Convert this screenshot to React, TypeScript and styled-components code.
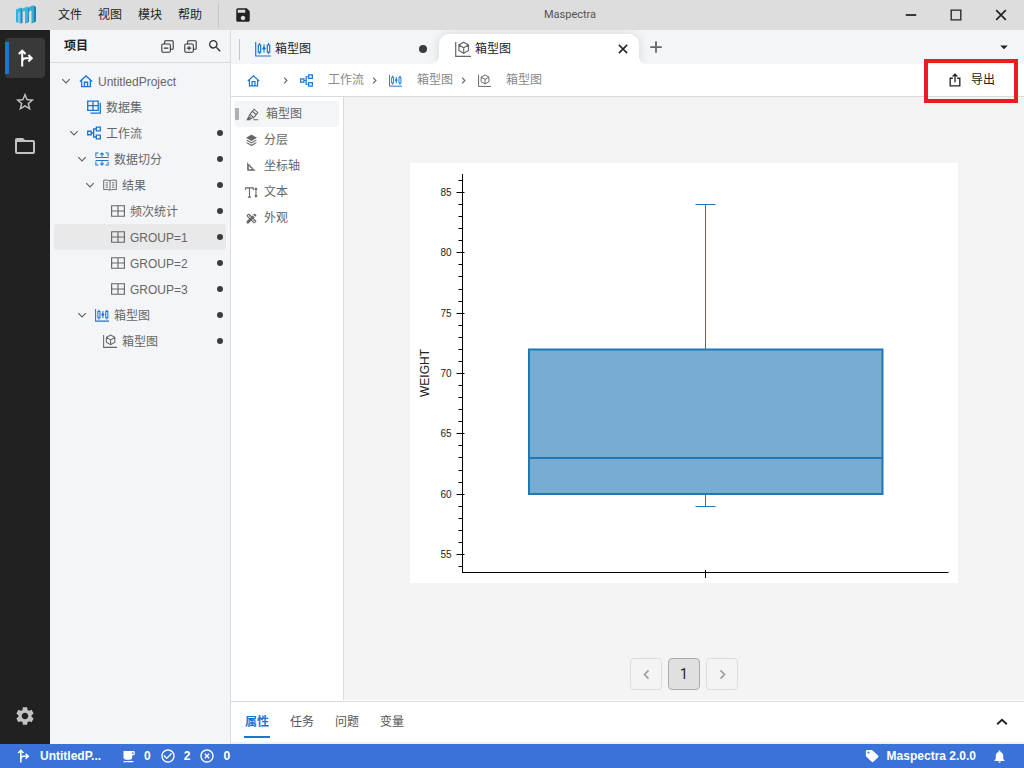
import React from "react";
import styled, { createGlobalStyle } from "styled-components";
import {
  MdSave,
  MdSearch,
  MdStarOutline,
  MdFolderOpen,
  MdSettings,
  MdLocalCafe,
  MdCheckCircleOutline,
  MdHighlightOff,
  MdNotifications,
  MdArrowDropDown,
  MdSquareFoot,
  MdDesignServices,
} from "react-icons/md";
import { RiStackFill } from "react-icons/ri";

const blue = "#1976d2";
const line = "#dadbdd";
const panel = "#f4f5f8";

const GlobalStyle = createGlobalStyle`
  *, *::before, *::after { box-sizing: border-box; }
  body {
    margin: 0;
    font: 400 12px/16px "Liberation Sans", "Noto Sans CJK SC", sans-serif;
    color: #666;
  }
  button { font: inherit; color: inherit; background: none; border: 0; padding: 0; cursor: pointer; }
  ul, ol { list-style: none; margin: 0; padding: 0; }
  svg { display: block; flex: none; }
`;

/* ---------- icons ---------- */

type IconName =
  | "branch" | "home" | "dataset" | "flow" | "split" | "book" | "grid"
  | "boxplot" | "cube" | "chevDown" | "chevRight" | "chevLeft" | "chevUp"
  | "collapse" | "expand" | "plus" | "close" | "minimize" | "maximize"
  | "share" | "pen" | "textSize" | "tag";

const drawings: Record<IconName, React.ReactNode> = {
  branch: (
    <g strokeWidth="1.8">
      <path d="M5.500 15.500V1.500M2.500 4.500 5.500 1.500l3 3M5.500 12c0-2.500.8-3.700 3-3.700h5.300M11 5.400l3 2.900-3 2.900" />
    </g>
  ),
  home: <path d="M1 8.600 8 2.200l7 6.400M3 7.200v7.300h10V7.200M6.200 14.200V9.400h3.600v4.800" strokeWidth="1.500" />,
  dataset: <path d="M.8 1.200h12v10.600h-12zM.8 6.500h12M6.800 1.200v10.600M15.200 3v12H4" strokeWidth="1.500" />,
  flow: <path d="M.8 6h4v4h-4zM10.700 1.200h4.500v4.300h-4.500zM10.700 10.500h4.500v4.300h-4.500zM4.800 8h2.700M10.700 3.400H7.600v9.200h3.100" strokeWidth="1.500" />,
  split: (
    <path
      d="M4 1.200H1V5M12 1.200h3V5M.5 6.300h15M.5 9.700h15M1 11v3.800h3M15 11v3.800h-3M8 5.300v-4M6 3l2-2 2 2M8 10.700v4M6 13l2 2 2-2"
      strokeWidth="1.200"
    />
  ),
  book: (
    <path
      d="M8 3v10.500M8 3.200C6 2.300 3 2.300.8 2.500v10.700c2.200-.2 5.200-.2 7.200.7 2-.9 5-.9 7.200-.7V2.500C13 2.300 10 2.300 8 3.200M3 5.500h2.700M3 8h2.700M3 10.500h2.700M10.300 5.500H13M10.300 8H13M10.300 10.500H13"
      strokeWidth="1.100"
    />
  ),
  grid: <path d="M.7 2h14.600v12H.7zM.7 8h14.600M8 2v12" strokeWidth="1.300" />,
  boxplot: (
    <path
      d="M.7 1v14H16M4.500 2v2M4.500 11v2M3.300 4h2.400v7.200H3.300zM9 3.500v8M7.800 7.500 9 6l1.200 1.500L9 9zM13.500 2v2M13.500 11v2M12.300 4h2.400v7.200h-2.400z"
      strokeWidth="1.200"
    />
  ),
  cube: (
    <path
      d="M.7 1v14.300H16M8.700 1.200l4.800 2.700v5.600l-4.800 2.700-4.800-2.700V3.900zM3.900 3.900l4.800 2.800 4.800-2.800M8.700 6.700V12"
      strokeWidth="1.200"
    />
  ),
  chevDown: <path d="m3 5.500 5 5 5-5" strokeWidth="1.700" />,
  chevRight: <path d="m5.500 3 5 5-5 5" strokeWidth="2" />,
  chevLeft: <path d="m10.500 3-5 5 5 5" strokeWidth="2" />,
  chevUp: <path d="m2.500 10.500 5.500-5 5.500 5" strokeWidth="2.200" />,
  collapse: (
    <g strokeWidth="1.300">
      <rect x="1" y="5" width="10.500" height="10" rx="1.500" />
      <path d="M4.500 5V2q0-1 1-1h8.500q1 0 1 1v8.500q0 1-1 1h-2.500M3.500 10h5.500" />
    </g>
  ),
  expand: (
    <g strokeWidth="1.300">
      <rect x="1" y="5" width="10.500" height="10" rx="1.500" />
      <path d="M4.500 5V2q0-1 1-1h8.500q1 0 1 1v8.500q0 1-1 1h-2.500M3.500 10h5.500M6.200 7.300v5.400" />
    </g>
  ),
  plus: <path d="M8 1.500v13M1.500 8h13" strokeWidth="2" />,
  close: <path d="m2.500 2.500 11 11M13.500 2.500l-11 11" strokeWidth="1.900" />,
  minimize: <path d="M2 8h12" strokeWidth="2" />,
  maximize: <path d="M2.500 2.500h11v11h-11z" strokeWidth="1.500" />,
  share: <path d="M5.500 6H2.500v8.700h11V6h-3M8 10.500v-9M5.300 4 8 1.300 10.700 4" strokeWidth="1.500" />,
  pen: (
    <path
      d="M1 14.500h4.500M1.500 14.300 5 7.500 10 1.500l4.500 4.300-5 6zM5 7.500l4.500 4.300M8 4l4.500 4.300M2 14l4.200-3.800M9 14.500h6"
      strokeWidth="1.300"
    />
  ),
  textSize: (
    <path
      d="M.8 5V2.300h9.400V5M5.500 2.300v11.400M3.500 13.700h4M13.500 2.500v11M12 4.500l1.500-2 1.500 2M12 11.500l1.500 2 1.500-2"
      strokeWidth="1.300"
    />
  ),
  tag: (
    <path
      fillRule="evenodd"
      d="M1 2.500Q1 1 2.500 1H8l7 6.500q.8.900 0 1.800L9.600 14.700q-1 .8-2 0L1 8.200zM4 2.800a1.200 1.200 0 1 0 0 2.400 1.200 1.200 0 0 0 0-2.400z"
      fill="currentColor"
      stroke="none"
    />
  ),
};

const Icon = ({ name, size = 14, color = "currentColor" }: { name: IconName; size?: number; color?: string }) => (
  <svg width={size} height={size} viewBox="0 0 16 16" fill="none" stroke={color} aria-hidden="true">
    {drawings[name]}
  </svg>
);

const Logo = () => (
  <svg width="20" height="20" viewBox="0 0 20 20" aria-hidden="true">
    <path d="M0 4.500 5 2.500v14L3.500 18V7L2.500 7.500V18L0 17z" fill="#2fb4e2" />
    <path d="M5 2.500 6.500 4v14l-3 .5L5 16.500z" fill="#1c86b4" />
    <path d="M6.500 3.500 11.500 1.500V16L9 18.500V6L6.500 7z" fill="#35b9df" />
    <path d="M11.500 1.500 13 3v14l-4 1.500L11.500 16z" fill="#1d8fbd" />
    <path d="M13 2 17.500.3V16L15.500 18.500V5.500L13 6.500z" fill="#2fb0dc" />
    <path d="M17.500.3 20 2v14.500l-4.500 2 2-2.500z" fill="#1f7fae" />
  </svg>
);

/* ---------- layout ---------- */

const Shell = styled.div`
  display: flex;
  flex-direction: column;
  min-height: 100vh;
`;

const TitleBar = styled.header`
  display: flex;
  align-items: center;
  height: 30px;
  padding: 0 1px 0 16px;
  background: #dddddd;
  color: #222;
`;

const Menu = styled.nav`
  display: flex;
  gap: 16px;
  padding: 0 16px 0 22px;
`;

const Divider = styled.span<{ $height: number }>`
  width: 1px;
  height: ${(p) => p.$height}px;
  background: #c6c6c8;
`;

const SaveButton = styled.button`
  margin-left: 15px;
`;

const AppTitle = styled.h1`
  flex: 1;
  margin: 0;
  text-align: center;
  font-family: Roboto, sans-serif;
  font-size: 11px;
  font-weight: 400;
  color: #555;
`;

const WindowButton = styled.button`
  display: grid;
  place-items: center;
  width: 45px;
  height: 30px;
`;

const Body = styled.div`
  display: flex;
  flex: 1;
`;

const Rail = styled.nav`
  display: flex;
  flex-direction: column;
  gap: 4px;
  width: 50px;
  padding: 8px 5px;
  background: #212121;
`;

const RailButton = styled.button<{ $active?: boolean; $last?: boolean }>`
  display: grid;
  place-items: center;
  height: 40px;
  border-radius: 4px;
  color: ${(p) => (p.$active ? "#fff" : "#c2c2c2")};
  background: ${(p) =>
    p.$active ? `linear-gradient(${blue}, ${blue}) 0 4px / 4px 32px no-repeat #393939` : "none"};
  margin-top: ${(p) => (p.$last ? "auto" : "0")};
`;

const Project = styled.aside`
  display: flex;
  flex-direction: column;
  width: 181px;
  background: ${panel};
  border-right: 1px solid ${line};
`;

const ProjectHeader = styled.div`
  display: flex;
  align-items: center;
  gap: 10px;
  height: 33px;
  padding: 0 7px 0 14px;
  border-bottom: 1px solid ${line};
  color: #333;
`;

const ProjectTitle = styled.h2`
  flex: 1;
  margin: 0;
  font-size: 12px;
  font-weight: 700;
  color: #222;
`;

const Tree = styled.ul`
  padding: 5px 4px;
`;

const TreeRow = styled.button<{ $level: number; $selected?: boolean }>`
  display: flex;
  align-items: center;
  width: 100%;
  height: 26px;
  padding: 0 3px 0 ${(p) => 6 + p.$level * 8}px;
  border-radius: 3px;
  background: ${(p) => (p.$selected ? "#e9e9e9" : "none")};
`;

const Twist = styled.span`
  width: 12px;
  margin-right: 7px;
`;

const TreeLabel = styled.span`
  flex: 1;
  padding: 2px 0 0 5px;
  text-align: left;
`;

const Dot = styled.span<{ $size: number }>`
  width: ${(p) => p.$size}px;
  height: ${(p) => p.$size}px;
  border-radius: 50%;
  background: #3c3c3c;
`;

const Main = styled.main`
  display: flex;
  flex: 1;
  flex-direction: column;
  min-width: 0;
  background: #fff;
`;

const TabBar = styled.div`
  display: flex;
  align-items: flex-end;
  height: 34px;
  padding: 0 11px 0 8px;
  background: ${panel};
`;

const TabDivider = styled(Divider)`
  margin-bottom: 4px;
`;

const Tab = styled.div<{ $active?: boolean }>`
  position: relative;
  display: flex;
  align-items: center;
  width: ${(p) => (p.$active ? 200 : 199)}px;
  height: 30px;
  padding: 0 ${(p) => (p.$active ? 10 : 12)}px 0 ${(p) => (p.$active ? 16 : 15)}px;
  border-radius: 10px 10px 0 0;
  background: ${(p) => (p.$active ? "#fff" : "none")};
  box-shadow: ${(p) => (p.$active ? "0 0 12px rgba(0, 0, 0, 0.13)" : "none")};
  clip-path: inset(-4px -14px 0 -14px);
  color: #222;

  &::before,
  &::after {
    content: ${(p) => (p.$active ? '""' : "none")};
    position: absolute;
    bottom: 0;
    width: 8px;
    height: 8px;
  }
  &::before {
    right: 100%;
    background: radial-gradient(circle at 0 0, transparent 8px, #fff 8px);
  }
  &::after {
    left: 100%;
    background: radial-gradient(circle at 100% 0, transparent 8px, #fff 8px);
  }
`;

const TabLabel = styled.button`
  display: flex;
  flex: 1;
  align-items: center;
  gap: 4px;
`;

const AddTab = styled.button`
  display: grid;
  place-items: center;
  width: 34px;
  height: 34px;
`;

const TabMenu = styled.button`
  margin: 0 0 8px auto;
  color: #222;
`;

const CrumbBar = styled.div`
  position: relative;
  display: flex;
  align-items: center;
  justify-content: space-between;
  height: 33px;
  padding: 0 29px 0 16px;
  border-bottom: 1px solid ${line};
`;

const Crumbs = styled.ol`
  display: flex;
  align-items: center;
`;

const Crumb = styled.li`
  display: flex;
  align-items: center;
`;

const CrumbLink = styled.a`
  display: flex;
  align-items: center;
  gap: 15px;
  color: #888;
  text-decoration: none;
`;

const CrumbArrow = styled.span`
  margin: 0 10px 0 6px;
`;

const ExportButton = styled.button`
  display: flex;
  align-items: center;
  gap: 9px;
  color: #222;
`;

const Highlight = styled.span`
  position: absolute;
  top: -5px;
  right: 6px;
  z-index: 1;
  width: 94px;
  height: 44px;
  border: 4px solid #ed1c24;
  pointer-events: none;
`;

const Workspace = styled.div`
  display: flex;
  flex: 1;
`;

const Options = styled.ul`
  width: 113px;
  padding: 4px 4px 0 3px;
  border-right: 1px solid ${line};
`;

const Option = styled.button<{ $active?: boolean }>`
  display: flex;
  align-items: center;
  gap: ${(p) => (p.$active ? 7 : 6)}px;
  width: 100%;
  height: 26px;
  padding-left: ${(p) => (p.$active ? 1 : 11)}px;
  border-radius: 4px;
  background: ${(p) => (p.$active ? panel : "none")};
`;

const Marker = styled.span`
  width: 4px;
  height: 12px;
  border-radius: 1px;
  background: #afafaf;
`;

const Canvas = styled.section`
  display: flex;
  flex: 1;
  flex-direction: column;
  min-width: 0;
  background: #f4f4f4;
`;

const ChartArea = styled.div`
  display: flex;
  flex: 1;
  align-items: center;
  justify-content: center;
`;

const Pager = styled.nav`
  display: flex;
  justify-content: center;
  gap: 6px;
  padding: 9px 0 10px;
`;

const PageButton = styled.button<{ $current?: boolean }>`
  display: grid;
  place-items: center;
  width: 32px;
  height: 32px;
  border: 1px solid ${(p) => (p.$current ? "#ababab" : "#dcdcdc")};
  border-radius: 4px;
  background: ${(p) => (p.$current ? "#e0e0e0" : "none")};
  color: ${(p) => (p.$current ? "#222" : "#9e9e9e")};
  font-family: Roboto, sans-serif;
  font-size: 14px;
`;

const BottomPanel = styled.section`
  padding-top: 1px;
  border-bottom: 2px solid #f0f0f0;
`;

const BottomTabs = styled.div`
  display: flex;
  align-items: center;
  height: 41px;
  padding: 0 15px 0 13px;
  gap: 19px;
  border-top: 1px solid ${line};
`;

const BottomTab = styled.button<{ $active?: boolean }>`
  height: 32px;
  padding: 2px 1px 0;
  border-bottom: 2px solid ${(p) => (p.$active ? blue : "transparent")};
  color: ${(p) => (p.$active ? blue : "#555")};
  font-weight: ${(p) => (p.$active ? 700 : 400)};
`;

const BottomToggle = styled.button`
  margin-left: auto;
  color: #222;
`;

const StatusBar = styled.footer`
  display: flex;
  align-items: center;
  height: 24px;
  padding: 0 17px 0 16px;
  background: #3a72d8;
  color: #fff;
  font-weight: 700;
`;

const StatusProject = styled.span`
  width: 82px;
  padding-left: 10px;
  margin-right: 9px;
`;

const StatusCount = styled.span`
  display: flex;
  align-items: center;
  gap: 8px;
  padding-right: 9px;
`;

const StatusVersion = styled.span`
  display: flex;
  align-items: center;
  gap: 8px;
  margin: 0 16px 0 auto;
`;

/* ---------- data ---------- */

interface Node {
  level: number;
  icon: IconName;
  label: string;
  open?: boolean;
  tinted?: boolean;
  dirty?: boolean;
  selected?: boolean;
}

const nodes: Node[] = [
  { level: 0, icon: "home", label: "UntitledProject", open: true, tinted: true },
  { level: 1, icon: "dataset", label: "数据集", tinted: true },
  { level: 1, icon: "flow", label: "工作流", open: true, tinted: true, dirty: true },
  { level: 2, icon: "split", label: "数据切分", open: true, tinted: true, dirty: true },
  { level: 3, icon: "book", label: "结果", open: true, dirty: true },
  { level: 4, icon: "grid", label: "频次统计", dirty: true },
  { level: 4, icon: "grid", label: "GROUP=1", dirty: true, selected: true },
  { level: 4, icon: "grid", label: "GROUP=2", dirty: true },
  { level: 4, icon: "grid", label: "GROUP=3", dirty: true },
  { level: 2, icon: "boxplot", label: "箱型图", open: true, tinted: true, dirty: true },
  { level: 3, icon: "cube", label: "箱型图", dirty: true },
];

const crumbs: { icon: IconName; label: string; tinted?: boolean }[] = [
  { icon: "home", label: "", tinted: true },
  { icon: "flow", label: "工作流", tinted: true },
  { icon: "boxplot", label: "箱型图", tinted: true },
  { icon: "cube", label: "箱型图" },
];

/* ---------- chart ---------- */

const yOf = (v: number) => Math.round(29 + (85 - v) * 12.067) + 0.5;
const ticks = Array.from({ length: 33 }, (_, i) => 54 + i);

const BoxPlot = () => (
  <svg width="548" height="420" viewBox="0 0 548 420" role="img" aria-label="WEIGHT">
    <rect width="548" height="420" fill="#fff" />
    <g stroke="#1f77b4" fill="none">
      <path d={`M295.5 ${yOf(84)}V187M295.5 331V${yOf(59)}M285.500 ${yOf(84)}h20M285.500 ${yOf(59)}h20`} />
      <rect x="119" y="186.500" width="353.500" height="144.500" fill="#78acd1" strokeWidth="2" />
      <path d="M119 295h353.500" strokeWidth="2" />
    </g>
    <path d="M52.500 11v399M52 409.500h486.500M295.500 407v8" stroke="#000" fill="none" />
    {ticks.map((v) => (
      <path key={v} d={v % 5 === 0 ? `M46.500 ${yOf(v)}h8` : `M48.500 ${yOf(v)}h4`} stroke="#000" />
    ))}
    <g fontFamily="Liberation Sans, sans-serif" fill="#222" fontWeight="400">
      {ticks
        .filter((v) => v % 5 === 0)
        .map((v) => (
          <text key={v} x="41.500" y={yOf(v) + 3.5} fontSize="10" textAnchor="end">
            {v}
          </text>
        ))}
      <text transform="translate(19 210) rotate(-90)" fontSize="12" textAnchor="middle">
        WEIGHT
      </text>
    </g>
  </svg>
);

/* ---------- page ---------- */

export default function App() {
  return (
    <Shell>
      <GlobalStyle />
      <TitleBar>
        <Logo />
        <Menu>
          {["文件", "视图", "模块", "帮助"].map((m) => (
            <button key={m}>{m}</button>
          ))}
        </Menu>
        <Divider $height={24} />
        <SaveButton aria-label="保存"><MdSave size={18} /></SaveButton>
        <AppTitle>Maspectra</AppTitle>
        <WindowButton aria-label="最小化"><Icon name="minimize" /></WindowButton>
        <WindowButton aria-label="最大化"><Icon name="maximize" /></WindowButton>
        <WindowButton aria-label="关闭"><Icon name="close" /></WindowButton>
      </TitleBar>

      <Body>
        <Rail>
          <RailButton $active aria-label="工作流"><Icon name="branch" size={18} /></RailButton>
          <RailButton aria-label="收藏"><MdStarOutline size={22} /></RailButton>
          <RailButton aria-label="文件夹"><MdFolderOpen size={24} /></RailButton>
          <RailButton $last aria-label="设置"><MdSettings size={22} /></RailButton>
        </Rail>

        <Project>
          <ProjectHeader>
            <ProjectTitle>项目</ProjectTitle>
            <button aria-label="全部折叠"><Icon name="collapse" size={13} /></button>
            <button aria-label="全部展开"><Icon name="expand" size={13} /></button>
            <button aria-label="搜索"><MdSearch size={16} /></button>
          </ProjectHeader>
          <Tree>
            {nodes.map((n, i) => (
              <li key={i}>
                <TreeRow $level={n.level} $selected={n.selected}>
                  <Twist>{n.open && <Icon name="chevDown" size={12} />}</Twist>
                  <Icon name={n.icon} color={n.tinted ? blue : "#666"} />
                  <TreeLabel>{n.label}</TreeLabel>
                  {n.dirty && <Dot $size={6} />}
                </TreeRow>
              </li>
            ))}
          </Tree>
        </Project>

        <Main>
          <TabBar>
            <TabDivider $height={21} />
            <Tab>
              <TabLabel><Icon name="boxplot" size={16} color={blue} />箱型图</TabLabel>
              <Dot $size={8} />
            </Tab>
            <Tab $active>
              <TabLabel><Icon name="cube" size={16} color="#666" />箱型图</TabLabel>
              <button aria-label="关闭标签"><Icon name="close" size={12} /></button>
            </Tab>
            <AddTab aria-label="新建标签"><Icon name="plus" size={14} /></AddTab>
            <TabMenu aria-label="标签列表"><MdArrowDropDown size={18} /></TabMenu>
          </TabBar>

          <CrumbBar>
            <Crumbs>
              {crumbs.map((c, i) => (
                <Crumb key={i}>
                  {i > 0 && <CrumbArrow><Icon name="chevRight" size={9} /></CrumbArrow>}
                  <CrumbLink href="#" aria-label={c.label || "主页"}>
                    <Icon name={c.icon} size={13} color={c.tinted ? blue : "#666"} />
                    <span>{c.label}</span>
                  </CrumbLink>
                </Crumb>
              ))}
            </Crumbs>
            <ExportButton><Icon name="share" />导出</ExportButton>
            <Highlight />
          </CrumbBar>

          <Workspace>
            <Options>
              <li><Option $active><Marker /><Icon name="pen" size={13} />箱型图</Option></li>
              <li><Option><RiStackFill size={13} />分层</Option></li>
              <li><Option><MdSquareFoot size={13} />坐标轴</Option></li>
              <li><Option><Icon name="textSize" size={13} />文本</Option></li>
              <li><Option><MdDesignServices size={13} />外观</Option></li>
            </Options>
            <Canvas>
              <ChartArea><BoxPlot /></ChartArea>
              <Pager>
                <PageButton aria-label="上一页"><Icon name="chevLeft" size={13} /></PageButton>
                <PageButton $current>1</PageButton>
                <PageButton aria-label="下一页"><Icon name="chevRight" size={13} /></PageButton>
              </Pager>
            </Canvas>
          </Workspace>

          <BottomPanel>
            <BottomTabs>
              {["属性", "任务", "问题", "变量"].map((t, i) => (
                <BottomTab key={t} $active={i === 0}>{t}</BottomTab>
              ))}
              <BottomToggle aria-label="展开"><Icon name="chevUp" size={14} /></BottomToggle>
            </BottomTabs>
          </BottomPanel>
        </Main>
      </Body>

      <StatusBar>
        <Icon name="branch" size={14} />
        <StatusProject>UntitledP...</StatusProject>
        <StatusCount><MdLocalCafe size={15} />0</StatusCount>
        <StatusCount><MdCheckCircleOutline size={16} />2</StatusCount>
        <StatusCount><MdHighlightOff size={16} />0</StatusCount>
        <StatusVersion><Icon name="tag" size={14} />Maspectra 2.0.0</StatusVersion>
        <MdNotifications size={15} />
      </StatusBar>
    </Shell>
  );
}
